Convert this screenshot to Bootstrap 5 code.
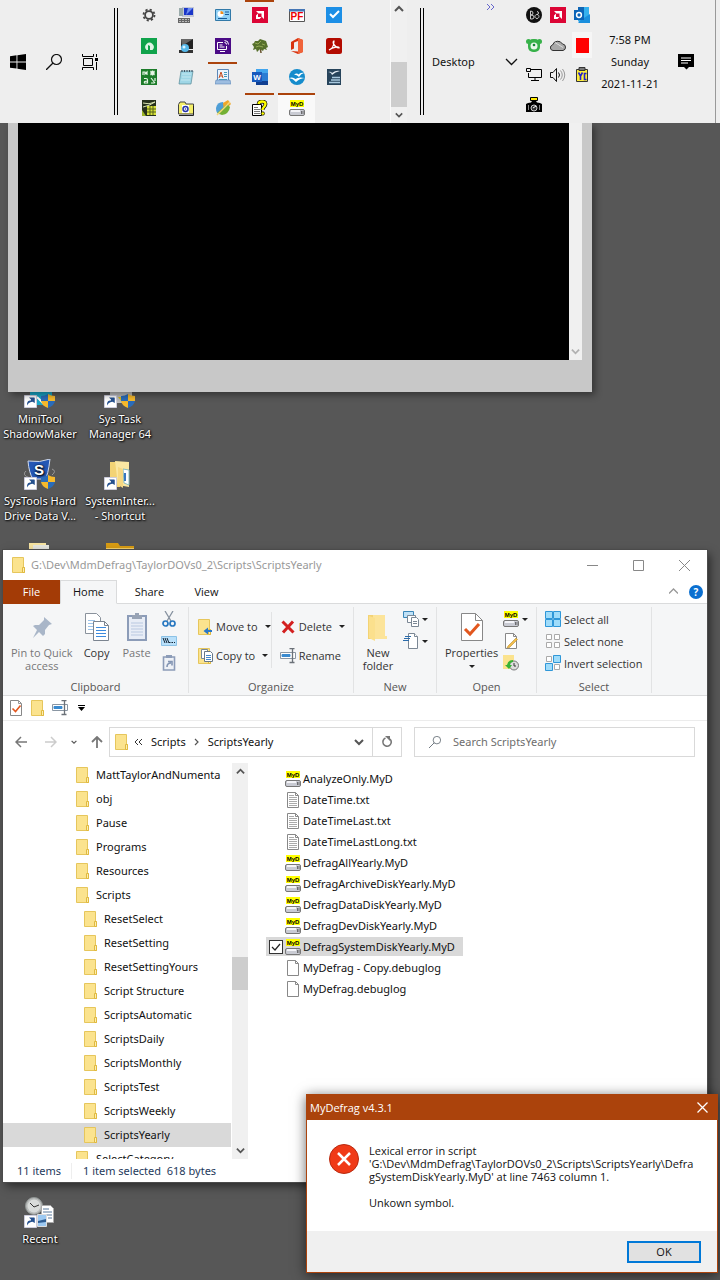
<!DOCTYPE html>
<html lang="en">
<head>
<meta charset="utf-8">
<meta name="viewport" content="width=device-width, initial-scale=1">
<title>Desktop</title>
<link href="https://cdn.jsdelivr.net/npm/bootstrap@5.3.0/dist/css/bootstrap.min.css" rel="stylesheet">
<style>
  :root { --accent: #ab430c; --ui: "Noto Sans", "Open Sans", sans-serif; --tight: "Open Sans", "Noto Sans", sans-serif; }
  body { font-family: var(--ui); font-size: 11px; line-height: 16px; color: #111; background: #575757; }
  button, input { font: inherit; }
  button { background: none; border: 0; padding: 0; color: inherit; }
  a { color: inherit; text-decoration: none; }
  svg { display: block; flex: none; }
  .i16 { width: 16px; height: 16px; }
  .i32 { width: 32px; height: 32px; }

  /* taskbar */
  .taskbar { background: #eee; height: 123px; z-index: 5; padding-right: 4px; }
  .rule { width: 4px; height: 107px; border: solid #000; border-width: 0 1px; flex: none; }
  .start-tools { width: 114px; padding: 0 16px 0 10px; }
  .apps { display: grid; grid-template-columns: repeat(6, 37px); grid-auto-rows: 31px; margin-left: 12px; height: 123px; overflow: hidden; }
  .apps button { display: grid; place-items: center; border-top: 2px solid transparent; margin: 0 4px; padding-bottom: 4px; }
  .apps .running { border-color: var(--accent); }
  .apps .front { border-color: var(--accent); background: #f9f9f9; margin: 0; }
  .bar-scroll { width: 17px; background: #f0f0f0; border-left: 1px solid #fafafa; margin-right: 13px; }
  .thumb { background: #cdcdcd; }
  .toolbar-menu { width: 90px; }
  .tray { display: grid; grid-template-columns: repeat(3, 24px); grid-auto-rows: 30px; }
  .tray button { display: grid; place-items: center; }
  .tray .lit { background: #f6f6f6; margin: 2px 2px; }
  .clock { line-height: 22px; width: 76px; }
  .edge { border-right: 1px solid #999; }

  /* desktop */
  .icons { display: grid; grid-template-columns: 80px 80px; grid-auto-rows: 82px; padding-top: 254px; width: 160px; }
  .icons a { color: #fff; text-align: center; line-height: 15px; text-shadow: 1px 1px 2px #000, 0 0 2px #000; white-space: nowrap; }
  .icons svg { margin: 0 auto 2px; }
  .icons .last { grid-row: 11; }
  .console { left: 8px; right: 128px; top: 0; height: 269px; background: #c8c8c8; padding: 0 10px 32px; box-shadow: 3px 3px 7px #0006; }
  .console-bar { width: 13px; background: #f0f0f0; }

  .explorer { left: 3px; right: 13px; top: 427px; bottom: 98px; background: #fff; box-shadow: 0 0 0 1px #4b4b4b, 3px 4px 9px #0008; }
  .caption, .tabs, .ribbon, .quick, .address, .status { flex-shrink: 0; }
  .caption { height: 30px; color: #999; padding-left: 8px; }
  .caption button { width: 46px; display: grid; place-items: center; }
  .tabs { height: 24px; border-bottom: 1px solid #dadbdc; font-size: 12px; font-family: var(--tight); font-size: 11px; }
  .tabs button { width: 57px; height: 24px; border: 1px solid transparent; }
  .tabs .tab-file { background: #a33b06; color: #fff; }
  .tabs .tab-on { background: #f5f6f7; border-color: #dadbdc; border-bottom-color: #f5f6f7; }
  .ribbon { background: #f5f6f7; height: 92px; border-bottom: 1px solid #dadbdc; padding: 3px 0 2px; font-family: var(--tight); }
  .group { border-right: 1px solid #e2e3e4; color: #333; line-height: 13px; padding-top: 1px; }
  .group > h2 { font-size: 11px; line-height: 13px; font-weight: 400; margin: auto 0 0; text-align: center; color: #555; }
  .big { display: flex; flex-direction: column; align-items: center; gap: 2px; line-height: 13px; white-space: nowrap; padding-top: 4px; }
  .dim { color: #777; }
  .cmd { display: flex; align-items: center; gap: 3px; white-space: nowrap; height: 22px; }
  .tri { width: 0; height: 0; border: solid transparent; border-width: 3px 3px 0; border-top-color: #222; }
  .split { border-left: 1px solid #e2e3e4; height: 56px; }
  .g-clip { width: 186px; } .g-org { width: 165px; padding-top: 5px; } .g-new { width: 83px; } .g-open { width: 100px; } .g-sel { width: 115px; }
  .g-org .cmd { height: 29px; }
  .quick { height: 25px; border-bottom: 1px solid #ececec; padding-left: 5px; gap: 6px; }
  .address { padding: 5px 12px 5px 8px; height: 41px; gap: 12px; }
  .steps { gap: 14px; }
  .box { border: 1px solid #d9d9d9; height: 30px; }
  .path { width: 293px; }
  .path .reload { border-left: 1px solid #d9d9d9; width: 29px; height: 28px; display: grid; place-items: center; }
  .find input { border: 0; outline: 0; width: 100%; min-width: 0; background: none; padding: 0; }
  .find input::placeholder { color: #6d6d6d; opacity: 1; }
  .panes { min-height: 0; padding-top: 1px; }
  .tree { width: 229px; overflow: hidden; }
  .tree a { display: flex; align-items: center; gap: 5px; height: 24px; padding-left: 72px; white-space: nowrap; overflow: hidden; width: 228px; color: #111; }
  .tree .sub { padding-left: 80px; }
  .tree .sel { background: #d9d9d9; }
  .tree-bar { width: 16px; background: #f0f0f0; }
  .files { padding: 5px 0 0 18px; }
  .files label { display: flex; align-items: center; height: 21px; padding: 0 8px 0 3px; width: max-content; white-space: nowrap; gap: 2px; }
  .files .sel { background: #d9d9d9; height: 19px; margin: 1px 0; }
  .files input { appearance: none; width: 14px; height: 14px; margin: 0; opacity: 0; }
  .files input:checked { opacity: 1; border: 1px solid #333; background: #fff url("data:image/svg+xml,%3Csvg xmlns='http://www.w3.org/2000/svg' viewBox='0 0 12 12'%3E%3Cpath d='M2 6l3 3 5-6' fill='none' stroke='%23222' stroke-width='1.2'/%3E%3C/svg%3E"); }
  .status { height: 23px; color: #1e395b; padding-left: 14px; gap: 10px; }
  .status span + span { border-left: 1px solid #eee; padding-left: 11px; }

  .alert-win { right: 2px; bottom: 7px; width: 412px; background: #fff; border: 1px solid var(--accent); box-shadow: 0 2px 12px #0009; font-family: var(--tight); }
  .alert-win header { background: var(--accent); color: #fff; height: 25px; padding: 0 9px 0 3px; }
  .alert-body { padding: 24px 16px 20px 22px; gap: 10px; line-height: 13px; min-height: 111px; white-space: nowrap; }
  .alert-win footer { background: #f0f0f0; height: 41px; padding: 0 16px; }
  .ok { width: 74px; height: 22px; border: 2px solid #0078d7; background: #e1e1e1; line-height: 14px; }
</style>
</head>
<body>
<svg width="0" height="0" class="position-absolute" aria-hidden="true">
  <symbol id="folder" viewBox="0 0 16 16"><path d="M1.500.5h11v10h1v5h-12z" fill="#fbe38e" stroke="#e6c65c"/><path d="M11.500 10.500h2v5h-2z" fill="#fdeeb0" stroke="#e0b93f"/></symbol>
  <symbol id="myd" viewBox="0 0 16 16"><path d="M1 0h14v7H1z" fill="#ff0"/><text x="8" y="6" text-anchor="middle" font-family="Liberation Sans" font-weight="700" font-size="6">MyD</text><rect x=".5" y="9.500" width="15" height="6" rx="1.500" fill="#c9cbd3" stroke="#777"/><path d="M2 11h9" stroke="#f4f4f8" stroke-width="2"/><path d="M12.500 11v3M14 11v3" stroke="#444" stroke-width=".7"/></symbol>
  <symbol id="txt" viewBox="0 0 16 16"><path d="M2.500.5h8l3 3v12h-11z" fill="#fff" stroke="#888"/><path d="M10.500.5v3h3" fill="none" stroke="#888"/><path d="M4 5.500h8M4 7.500h8M4 9.500h8M4 11.500h8M4 13.500h8M4 3.500h5" stroke="#aaa"/></symbol>
  <symbol id="blank" viewBox="0 0 16 16"><path d="M2.500.5h8l3 3v12h-11z" fill="#fff" stroke="#888"/><path d="M10.500.5v3h3" fill="none" stroke="#888"/></symbol>
  <symbol id="check" viewBox="0 0 16 16"><path d="M2.500.5h8l3 3v12h-11z" fill="#fff" stroke="#888"/><path d="M10.500.5v3h3" fill="none" stroke="#999"/><path d="M4.500 8.500l3 3 5-6" fill="none" stroke="#e2571e" stroke-width="1.600"/></symbol>
  <symbol id="rename" viewBox="0 0 16 16"><path d="M.5 4.500h15v6H.5z" fill="#fff" stroke="#8a96a3"/><path d="M2 6.500h8v2H2z" fill="#3a8bd0" stroke="#3a8bd0"/><path d="M9.500.5h5M9.500 14.500h5M12.500.5v14" fill="none" stroke="#6b7178" stroke-width="1.300"/></symbol>
  <symbol id="up" viewBox="0 0 10 10"><path d="M1 7l4-4 4 4" fill="none" stroke="#555" stroke-width="2"/></symbol>
  <symbol id="down" viewBox="0 0 10 10"><path d="M1 3l4 4 4-4" fill="none" stroke="#555" stroke-width="2"/></symbol>
  <symbol id="mag" viewBox="0 0 16 16"><circle cx="10.500" cy="5.500" r="5" fill="none" stroke="currentColor" stroke-width="1.200"/><path d="M7 9L0 16" stroke="currentColor" stroke-width="1.300"/></symbol>
  <symbol id="amd" viewBox="0 0 16 16"><path d="M0 0h16v16H0z" fill="#dc0535"/><path d="M4 4h8v8l-2.500-2.500v-3h-3zM4 8.500L6 6.500V10h3.500l-2 2H4z" fill="#fff"/></symbol>
  <symbol id="arrow" viewBox="0 0 13 13"><path d="M.5.500h12v12H.5z" fill="#fff" stroke="#ccd"/><path d="M3 10.500c0-4 1-5 4-5V3h3.500v5L9 6.800C6 7 4.500 8 3 10.500z" fill="#25508f"/><path d="M5 2.500h5.500V8z" fill="#25508f"/></symbol>
  <symbol id="shield" viewBox="0 0 14 14"><path d="M0 2q4 0 7-2v7H0z" fill="#2b6cb8"/><path d="M14 2q-4 0-7-2v7h7z" fill="#f6b92c"/><path d="M0 7h7v7Q1 12 0 7z" fill="#f6b92c"/><path d="M14 7H7v7q6-2 7-7z" fill="#2b6cb8"/></symbol>
</svg>

<div class="d-flex flex-column min-vh-100">
<nav class="taskbar d-flex align-items-center position-relative" aria-label="Taskbar">
  <div class="start-tools d-flex justify-content-between">
    <button aria-label="Start"><svg class="i16" viewBox="0 0 16 16"><path d="M0 2.200L6.500 1.300V7.500H0zM7.400 1.200L16 0v7.500H7.400zM0 8.400h6.500v6.200L0 13.700zM7.400 8.400H16V16l-8.600-1.200z"/></svg></button>
    <button aria-label="Search"><svg class="i16" viewBox="0 0 16 16"><use href="#mag"/></svg></button>
    <button aria-label="Task view"><svg class="i16" viewBox="0 0 16 16" fill="none" stroke="#000"><path d="M1.500 4.500h9v7h-9zM.5 0v2.500h11V0M.5 16v-2.500h11V16M14.500 0v3M14.500 8v8"/><path d="M13 4h3v3h-3z" fill="#000" stroke="none"/></svg></button>
  </div>
  <div class="rule"></div>
  <div class="apps">
    <button aria-label="Settings"><svg class="i16" viewBox="0 0 16 16" fill="none" stroke="#444"><circle cx="8" cy="8" r="5.500" stroke-width="1.800" stroke-dasharray="2.160 2.160"/><circle cx="8" cy="8" r="3.900" stroke-width="1.800"/></svg></button>
    <button aria-label="Computer"><svg class="i16" viewBox="0 0 16 16"><path d="M4 0h12v10H4z" fill="#c4c8d6"/><path d="M6 1h9v7H6z" fill="#1935c9"/><path d="M10 1h5L8 8z" fill="#6c8cf0"/><path d="M1 1h4v8H1z" fill="#9aa"/><path d="M0 11h12v5H0z" fill="#666"/><path d="M1 12.500h10M1 14.500h10" stroke="#bbb" stroke-dasharray="2 1"/></svg></button>
    <button aria-label="Control Panel"><svg class="i16" viewBox="0 0 16 16"><path d="M.5 2.500h15v11H.5z" fill="#8fd0f5" stroke="#3179a8"/><circle cx="5.500" cy="7" r="3" fill="#fff"/><path d="M5.500 7V4a3 3 0 0 1 3 3z" fill="#f08c1a"/><path d="M10 5h4M10 7.500h4M3 11.500h9" stroke="#145b9c"/></svg></button>
    <button class="running" aria-label="AMD"><svg class="i16"><use href="#amd"/></svg></button>
    <button aria-label="PF"><svg class="i16" viewBox="0 0 16 16"><path d="M.5 2.500h15v12H.5z" fill="#fff" stroke="#555"/><path d="M0 2h16v2.500H0z" fill="#4576b5"/><text x="8" y="13" text-anchor="middle" font-family="Liberation Sans" font-weight="700" font-size="10" fill="#e00">PF</text></svg></button>
    <button aria-label="To Do"><svg class="i16" viewBox="0 0 16 16"><path d="M0 0h16v16H0z" fill="#1c8fe6"/><path d="M4 7l3 3 6-6" fill="none" stroke="#fff" stroke-width="2"/></svg></button>

    <button aria-label="Green app"><svg class="i16" viewBox="0 0 16 16"><path d="M0 0h16v16H0z" fill="#10a34b"/><path d="M5.500 12a4.200 4.200 0 1 1 6 0H9V8L7 7v5z" fill="#dff5e6"/></svg></button>
    <button aria-label="Network"><svg class="i16" viewBox="0 0 16 16"><path d="M3 1h12v10H3z" fill="#222"/><path d="M3 1h12L4 8z" fill="#666"/><path d="M1 12h14v3H1z" fill="#333"/><circle cx="7" cy="10" r="4" fill="#55b8ea"/><circle cx="6" cy="9" r="1.500" fill="#d9f3ff"/></svg></button>
    <button aria-label="Media"><svg class="i16" viewBox="0 0 16 16"><path d="M0 0h16v16H0z" fill="#4b0b86"/><path d="M8 4.500H2.500v7h9V8M5 13.500h5M9.500 4.500q2 0 2 2M9.500 2.500q4 0 4 4" fill="none" stroke="#fff"/><path d="M4.500 7h3M4.500 9h5" stroke="#fff"/></svg></button>
    <button aria-label="Tree"><svg class="i16" viewBox="0 0 16 16"><path d="M8 8l1 7" stroke="#66512c" stroke-width="1.500"/><path d="M0 6l2-1 1-2 3 0 2-2 3 1 3 1 1 3 1 3-2 1 1 2-3-1-1 2-3-2-3 3-1-3-3 1 1-3z" fill="#56702c"/><path d="M3 5l3 1 3-3M10 6l3 1M4 9l3-1 4 1" stroke="#93aa55" fill="none"/></svg></button>
    <button aria-label="Office"><svg class="i16" viewBox="0 0 16 16"><path d="M2 4l7-4 5 2v12l-5 2-7-3 7 .5V3L5 4.500v6L2 12z" fill="#d8330f"/><path d="M9 0l5 2v12l-5 2z" fill="#f0633a"/></svg></button>
    <button aria-label="Acrobat"><svg class="i16" viewBox="0 0 16 16"><rect width="16" height="16" rx="2.500" fill="#b30b00"/><path d="M3 12c3-1 5-5 5-9-2 0-.5 6 5 7 1-2-6-1-10 2z" fill="none" stroke="#fff" stroke-width="1.200"/></svg></button>

    <button aria-label="Excel tool"><svg class="i16" viewBox="0 0 16 16"><path d="M0 0h16v16H0z" fill="#1c7c2a"/><path d="M2 6V3h2v2l2-2v3M9 4h5M11.500 1.500v5M9.500 2l4 4M13.500 2l-4 4M10 9l4 5M14 9v3M13.500 14H10M3 9.500h2q1.500 0 1.500 1.500v3h-3q-1-2 3-2" fill="none" stroke="#e6f5e6" stroke-width="1.200"/></svg></button>
    <button aria-label="Notepad"><svg class="i16" viewBox="0 0 16 16"><path d="M3 2h12l-2 13H1z" fill="#9fd6e6" stroke="#578997" stroke-width=".7"/><path d="M4 5h9M4 8h9M3 11h9" stroke="#c4e7f0"/><path d="M4 1v2M6.500 1v2M9 1v2M11.500 1v2M14 1v2" stroke="#456"/></svg></button>
    <button class="running" aria-label="WordPad"><svg class="i16" viewBox="0 0 16 16"><path d="M2.500.5h11v11h-11z" fill="#e9f3fc" stroke="#5b87b8"/><path d="M1 11l-1 4h16l-1-4z" fill="#9dbde0" stroke="#5b87b8" stroke-width=".6"/><path d="M4 9l2-6 2 6M5 7h2" fill="none" stroke="#c64d21"/><path d="M9 3.500h3M9 5.500h3M9 7.500h3M4 10.500h8" stroke="#49b"/></svg></button>
    <button aria-label="Word"><svg class="i16" viewBox="0 0 16 16"><path d="M4 0h12v16H4z" fill="#2b7cd3"/><path d="M4 0h12v4H4z" fill="#41a5ee"/><path d="M4 12h12v4H4z" fill="#103f91"/><path d="M0 3h10v10H0z" fill="#185abd"/><text x="5" y="11" text-anchor="middle" font-family="Liberation Sans" font-weight="700" font-size="8" fill="#fff">W</text></svg></button>
    <button aria-label="OpenOffice"><svg class="i16" viewBox="0 0 16 16"><circle cx="8" cy="8" r="8" fill="#158ccc"/><path d="M5 5.500q3-2 4.500 0 2-2.500 5.500-1.500-3 .5-5 4-2-2.500-5-2.500zM0 9q4-1.500 6.500 1 3-2.500 9-1-5 .5-8.500 4Q4 9.500 0 9z" fill="#fff"/></svg></button>
    <button aria-label="Writer"><svg class="i16" viewBox="0 0 16 16"><path d="M1 0h14v16H1z" fill="#27445b"/><path d="M2 3q3-1 4 1 4-3 8-2-5 1-8 4-1-3-4-3z" fill="#e6eef5"/><path d="M6 8.500h8M5 11h9M3 13.500h11" stroke="#a8c8de" stroke-width="1.500"/></svg></button>

    <button aria-label="Calc"><svg class="i16" viewBox="0 0 16 16"><path d="M1 0h14v16H1z" fill="#26301c"/><path d="M2 3q6 2 12-1M2 7q6-1 12-5" stroke="#dbe6b4" fill="none"/><path d="M6 6h9v9H6z" fill="#d6e03a"/><path d="M6 9h9M6 12h9M9 6v9M12 6v9" stroke="#55621a"/><path d="M1 10l4 6H1z" fill="#9bb327"/></svg></button>
    <button aria-label="Mail folder"><svg class="i16" viewBox="0 0 16 16"><path d="M.5 4.500L2 2h5l1 2h7.500v10H.5z" fill="#f5ef6a" stroke="#444"/><path d="M4 5h7v8H4z" fill="#fff"/><circle cx="7.500" cy="9" r="2.500" fill="none" stroke="#2434a8" stroke-width="1.500"/><circle cx="7.500" cy="9" r=".8" fill="#2434a8"/><path d="M1 15.500h14.500V6" stroke="#222" fill="none"/></svg></button>
    <button aria-label="Paint"><svg class="i16" viewBox="0 0 16 16"><path d="M1 8q1-6 7-6l3 7-5 5q-5 1-5-6z" fill="#4e9ed6"/><path d="M8 3l5-3 3 4-7 7z" fill="#f0a728"/><path d="M2 13L12 4l3 3q-1 7-8 8z" fill="#73b034"/><path d="M2 15L15 2" stroke="#f3d77a" stroke-width="1.500"/></svg></button>
    <button class="running" aria-label="Help"><svg class="i16" viewBox="0 0 16 16"><path d="M.5 4.500h9v11h-9z" fill="#fff" stroke="#000"/><path d="M2 7.500h4M2 9.500h6M2 11.500h6M2 13.500h6" stroke="#777"/><path d="M6.500 4q.5-2.500 3.500-2.500 3.500 0 3.500 2.500c0 2.500-3 3-3 6" fill="none" stroke="#000" stroke-width="3.800"/><path d="M6.500 4q.5-2.500 3.500-2.500 3.500 0 3.500 2.500c0 2.500-3 3-3 6" fill="none" stroke="#ff0" stroke-width="2.400"/><circle cx="10.800" cy="13.500" r="1.700" fill="#ff0" stroke="#000" stroke-width=".7"/></svg></button>
    <button class="front" aria-label="MyDefrag"><svg class="i16"><use href="#myd"/></svg></button>
  </div>
  <div class="ms-auto"></div>
  <div class="bar-scroll d-flex flex-column align-items-center h-100 pt-1 pb-1">
    <svg width="10" height="10"><use href="#up"/></svg>
    <div class="thumb w-100 mt-auto mb-1" style="height:45px"></div>
    <svg width="10" height="8"><use href="#down"/></svg>
  </div>
  <div class="rule me-2"></div>
  <div class="toolbar-menu position-relative h-100 d-flex align-items-center">
    <button class="d-flex align-items-center justify-content-between w-100 ps-0 px-1" style="height:32px">Desktop
      <svg width="13" height="13" viewBox="0 0 13 13"><path d="M1 4l5.500 5.500L12 4" fill="none" stroke="#111" stroke-width="1.300"/></svg></button>
    <svg class="position-absolute top-0 end-0 me-4 mt-1" width="12" height="6" viewBox="0 0 12 6" fill="none" stroke="#66c"><path d="M1 0l3 3-3 3M5 0l3 3-3 3"/></svg>
  </div>
  <div class="tray h-100">
    <button aria-label="B&amp;O"><svg class="i16" viewBox="0 0 16 16"><circle cx="8" cy="8" r="8" fill="#111"/><path d="M4.500 4v8h1.500q2 0 2-2T5 8q2 0 2-2T4.500 4M11 4.500a1.500 1.500 0 1 1 0 3 2 2 0 1 1-.1 0" fill="none" stroke="#ddd" stroke-width=".9"/></svg></button>
    <button aria-label="AMD"><svg class="i16"><use href="#amd"/></svg></button>
    <button aria-label="Outlook"><svg class="i16" viewBox="0 0 16 16"><path d="M4 0h11v14H4z" fill="#35b1ee"/><path d="M4 0h6v6H4z" fill="#1066b5"/><path d="M4 15l12-8v9H5z" fill="#1a8fdd"/><path d="M0 3h10v10H0z" fill="#0a64b8"/><circle cx="5" cy="8" r="2.400" fill="none" stroke="#fff" stroke-width="1.500"/></svg></button>
    <button aria-label="Bear"><svg class="i16" viewBox="0 0 16 16"><circle cx="2.500" cy="4.500" r="2.500" fill="#37b14a"/><circle cx="13.500" cy="4.500" r="2.500" fill="#37b14a"/><rect x="2" y="2" width="12" height="13" rx="5" fill="#37b14a"/><circle cx="8" cy="9" r="3.500" fill="#e8f7ea"/><circle cx="8" cy="8" r="1.300" fill="#183"/></svg></button>
    <button aria-label="OneDrive"><svg class="i16" viewBox="0 0 16 16"><path d="M3 13.500a2.800 2.800 0 0 1-.5-5.500 5.500 5.500 0 0 1 10-1 3.300 3.300 0 0 1 .5 6.500z" fill="#a9a9a9" stroke="#333"/><path d="M5 5.500l8 5" stroke="#ddd"/></svg></button>
    <button class="lit" aria-label="Red"><svg width="13" height="15"><path d="M0 0h13v15H0z" fill="#f00"/></svg></button>
    <button aria-label="Network status"><svg class="i16" viewBox="0 0 16 16" fill="none" stroke="#000"><path d="M5 2.500h10.500v8H2.500V6M9 10.500v3M5 13.500h8M.5 1.500h4v3h-4z"/></svg></button>
    <button aria-label="Volume"><svg class="i16" viewBox="0 0 16 16" fill="none" stroke="#111"><path d="M.5 5.500H3l3.500-4v13L3 10.500H.5z"/><path d="M8.500 5.500q2 2.500 0 5"/><path d="M10.500 3.500q3.500 4.500 0 9M12.500 2q4.500 6 0 12" stroke="#999"/></svg></button>
    <button aria-label="Clipboard"><svg class="i16" viewBox="0 0 16 16"><path d="M2.500 2.500h11v12h-11z" fill="#ffef3a" stroke="#333"/><path d="M5 .5h6v3H5z" fill="#777" stroke="#333"/><path d="M4.500 5.500l2 3.500v4M8.500 5.500L6.500 9M12.500 6.500h-2v6h2" fill="none" stroke="#22c" stroke-width="1.600"/></svg></button>
    <button aria-label="Camera"><svg class="i16" viewBox="0 0 16 16"><path d="M4.500.5h7v3h-7z" fill="#ffea00" stroke="#000"/><path d="M0 7l2-1 3-.5L6 4h4l1 1.500 3 .5 2 1v8H0z"/><circle cx="8" cy="11" r="3" fill="#333" stroke="#ccc"/><path d="M7 11l3-2" stroke="#fff"/><path d="M2.500 8v5M13.500 8v5" stroke="#888"/></svg></button>
  </div>
  <div class="clock text-center pe-2 ps-1"><div>7:58 PM</div><div>Sunday</div><div>2021-11-21</div></div>
  <button class="h-100 edge ps-2" style="width:46px" aria-label="Notifications"><svg class="i16" viewBox="0 0 16 16"><path d="M0 0h16v13h-5l-2.500 2.500L6 13H0z"/><path d="M3 4h10M3 6.500h10M3 9h7" stroke="#fff"/></svg></button>
</nav>

<main class="position-relative flex-fill">
  <div class="icons">
    <a href="#"><svg class="i32" viewBox="0 0 32 32"><path d="M6 4h22v24H6z" fill="#19a7c8"/><path d="M13 20l8 8" stroke="#fff" stroke-width="2"/><use href="#arrow" x="0" y="18" width="13" height="13"/><use href="#shield" x="17" y="17" width="14" height="14"/></svg>MiniTool<br>ShadowMaker</a>
    <a href="#"><svg class="i32" viewBox="0 0 32 32"><path d="M6 4h22v22H6z" fill="#bbb"/><path d="M14 20l6 8 3-8z" fill="#d6b920"/><use href="#arrow" x="0" y="18" width="13" height="13"/><use href="#shield" x="17" y="17" width="14" height="14"/></svg>Sys Task<br>Manager 64</a>
    <a href="#"><svg class="i32" viewBox="0 0 32 32"><path d="M4 2q12 2 22-2-2 17-5 20H9Q5 14 4 2z" fill="#2457b5" stroke="#ccd8ee"/><path d="M2 12q-5 4 4 7M28 10q5 2 0 6" stroke="#999" fill="none"/><text x="15" y="16" text-anchor="middle" font-family="Liberation Sans" font-weight="700" font-size="15" fill="#fff">S</text><use href="#arrow" x="0" y="18" width="13" height="13"/><use href="#shield" x="17" y="16" width="14" height="14"/></svg>SysTools Hard<br>Drive Data V...</a>
    <a href="#"><svg class="i32" viewBox="0 0 32 32"><path d="M6 3h10v25H6z" fill="#f3d375"/><path d="M11 2l14 1v25l-11-2z" fill="#fbe7a2"/><path d="M19 10l6 1v15l-5-2z" fill="#fff" stroke="#8bb"/><path d="M21 14v8" stroke="#3a78c0" stroke-width="2"/><path d="M14 8l5 2v19l-5-3z" fill="#f7d983"/><use href="#arrow" x="0" y="18" width="13" height="13"/></svg>SystemInter...<br>- Shortcut</a>
    <a href="#" aria-label="Folder"><svg class="i32" viewBox="0 0 32 32"><path d="M5 2h17v28H5z" fill="#f6e3a0"/><path d="M9 4h16v28H9z" fill="#e7e7e0"/></svg></a>
    <a href="#" aria-label="Folder"><svg class="i32" viewBox="0 0 32 32"><path d="M2 2h12l2 3h14v25H2z" fill="#d79b12"/><path d="M2 7h28v23H2z" fill="#f8d46b"/></svg></a>
    <a href="#" class="last"><svg class="i32" viewBox="0 0 32 32"><circle cx="10" cy="9" r="8.500" fill="#b9bcbb" stroke="#8f9493"/><circle cx="10" cy="9" r="6.500" fill="#d9dcdb"/><path d="M6 6l4 4 5-2" fill="none" stroke="#333"/><path d="M17.500 8.500h9l3 3v14h-12z" fill="#fff" stroke="#aaa"/><path d="M19 12h6M19 15h9M19 18h9M24 21h4" stroke="#58789c"/><path d="M13.500 17.500h9v12h-9z" fill="#9cc9f2" stroke="#ddd"/><path d="M14 24l8-2v3l-8 1z" fill="#2e5d93"/><use href="#arrow" x="0" y="18" width="13" height="13"/></svg>Recent</a>
  </div>

  <section class="console position-absolute d-flex" aria-label="Console">
    <div class="bg-black flex-fill"></div>
    <div class="console-bar d-flex align-items-end justify-content-center pb-1"><svg width="9" height="9" viewBox="0 0 10 10" opacity=".4"><use href="#down"/></svg></div>
  </section>

  <section class="explorer position-absolute d-flex flex-column" aria-label="File Explorer">
    <div class="caption d-flex align-items-center">
      <svg class="i16"><use href="#folder"/></svg>
      <span class="ms-1 me-auto text-nowrap">G:\Dev\MdmDefrag\TaylorDOVs0_2\Scripts\ScriptsYearly</span>
      <button aria-label="Minimize"><svg width="11" height="11"><path d="M0 5.500h11" stroke="#888"/></svg></button>
      <button aria-label="Maximize"><svg width="11" height="11"><path d="M.5.500h10v10H.5z" fill="none" stroke="#888"/></svg></button>
      <button aria-label="Close"><svg width="11" height="11"><path d="M0 0l11 11M11 0L0 11" stroke="#888"/></svg></button>
    </div>
    <div class="tabs d-flex">
      <button class="tab-file">File</button><button class="tab-on">Home</button><button class="ms-1">Share</button><button>View</button>
      <div class="ms-auto d-flex align-items-center pe-1" style="gap:11px">
        <svg width="9" height="9" viewBox="0 0 9 9"><path d="M0 6.500L4.500 2 9 6.500" fill="none" stroke="#999" stroke-width="1.300"/></svg>
        <svg width="14" height="14" viewBox="0 0 14 14"><circle cx="7" cy="7" r="7" fill="#0a6fd0"/><text x="7" y="11" text-anchor="middle" font-weight="700" font-size="10" fill="#fff" font-family="Open Sans">?</text></svg>
      </div>
    </div>
    <div class="ribbon d-flex">
      <div class="group g-clip d-flex flex-column">
        <div class="d-flex align-items-start gap-2 ps-2">
          <button class="big dim"><svg class="i32" viewBox="0 0 32 32"><path d="M18 5l8 7-3 1-4 5v4l-2 2-4-4-6 6 4-8-4-4 2-1h4l5-5z" fill="#a9b6c8"/></svg>Pin to Quick<br>access</button>
          <button class="big"><svg class="i32" viewBox="0 0 32 32"><path d="M4.500 1.500h11l4 4v16h-15z" fill="#fff" stroke="#8a929c"/><path d="M7 8.500h7M7 11.500h7M7 14.500h7M7 17.500h7" stroke="#9cc3ea"/><path d="M12.500 9.500h11l4 4v15h-15z" fill="#fff" stroke="#7b8490"/><path d="M23.500 9.500v4h4" fill="none" stroke="#7b8490"/><path d="M15 15.500h10M15 18.500h10M15 21.500h10M15 24.500h10" stroke="#3b8ade"/></svg>Copy</button>
          <button class="big dim"><svg class="i32" viewBox="0 0 32 32"><path d="M7 4h18v24H7z" fill="#e8edf6" stroke="#8c9cb8" stroke-width="2"/><path d="M11 3h3V1h4v2h3v4H11z" fill="#98a3b5"/><path d="M10 11h12M10 14h12M10 17h12M10 20h12M10 23h12" stroke="#b9c8e0"/></svg>Paste</button>
          <div class="d-flex flex-column">
            <button class="cmd" aria-label="Cut"><svg class="i16" viewBox="0 0 16 16" fill="none"><path d="M4 0l6 10M12 0L6 10" stroke="#8792a0" stroke-width="1.300"/><circle cx="4.500" cy="12.500" r="2.500" stroke="#2878c0" stroke-width="1.700"/><circle cx="11.500" cy="12.500" r="2.500" stroke="#2878c0" stroke-width="1.700"/></svg></button>
            <button class="cmd" aria-label="Copy path"><svg class="i16" viewBox="0 0 16 16"><path d="M.5 3.500h15v9H.5z" fill="#b9e0fa" stroke="#8cc2e6"/><path d="M2 5l2 5M4 5l2 5M6 5l2 5" stroke="#123"/><path d="M8 9.500h6" stroke="#123" stroke-dasharray="1.500 1"/></svg></button>
            <button class="cmd" aria-label="Paste shortcut"><svg class="i16" viewBox="0 0 16 16"><path d="M2.500 2h11v13h-11z" fill="#eef1f6" stroke="#8c9cb8" stroke-width="1.600"/><path d="M5 0h6v3H5z" fill="#8c9cb8"/><path d="M6 12q0-4 4-4M7 6.500h4v4" fill="none" stroke="#8395b3" stroke-width="1.600"/></svg></button>
          </div>
        </div>
        <h2>Clipboard</h2>
      </div>
      <div class="group g-org d-flex flex-column">
        <div class="d-flex">
          <div class="ps-2">
            <button class="cmd"><svg class="i16" viewBox="0 0 16 16"><use href="#folder"/><path d="M15 11h-4V8.500L6.500 12l4.500 3.500V13h4z" fill="#2a78c8"/></svg>Move to <i class="tri ms-1"></i></button>
            <button class="cmd"><svg class="i16" viewBox="0 0 16 16"><use href="#folder"/><path d="M4.500 1.500h6v9h-6z" fill="#fff" stroke="#789"/><path d="M7.500 3.500h6l2 2v8h-8z" fill="#fff" stroke="#678"/><path d="M9 7.500h5M9 9.500h5M9 11.500h5" stroke="#48c"/></svg>Copy to <i class="tri ms-1"></i></button>
          </div>
          <div class="split ms-auto me-1"></div>
          <div class="ps-1 pe-2">
            <button class="cmd"><svg class="i16" viewBox="0 0 16 16"><path d="M2.500 2.500l11 11M13 2.500L3 13.500" stroke="#d32020" stroke-width="3"/></svg>Delete <i class="tri ms-1"></i></button>
            <button class="cmd"><svg class="i16"><use href="#rename"/></svg>Rename</button>
          </div>
        </div>
        <h2>Organize</h2>
      </div>
      <div class="group g-new d-flex flex-column">
        <div class="d-flex align-items-start justify-content-between px-2">
          <button class="big"><svg class="i32" viewBox="0 0 32 32"><path d="M6 3h10v24H6z" fill="#f3d375"/><path d="M11 3h12v21h2v3H11z" fill="#fce49a"/><path d="M7 4l6 2v23l-6-3z" fill="#fbe08d"/></svg>New<br>folder</button>
          <div>
            <button class="cmd" aria-label="New item"><svg class="i16" viewBox="0 0 16 16" fill="#fff" stroke="#7b8794"><path d="M.5.500h10v6H.5z" fill="#bfe1f7" stroke="#3a86b8"/><path d="M4.500 4.500h8v7h-8z"/><path d="M8.500 6.500h5l2 2v7h-7z"/><path d="M10 10.500h4M10 12.500h4"/></svg><i class="tri"></i></button>
            <button class="cmd" aria-label="Easy access"><svg class="i16" viewBox="0 0 16 16" fill="#fff" stroke="#7b8794"><path d="M5.500.5h6l3 3v12h-9z"/><path d="M11.500.5v3h3"/><path d="M2 3.500h6M1 5.500h6M0 7.500h6" stroke="#2b6cab"/></svg><i class="tri"></i></button>
          </div>
        </div>
        <h2>New</h2>
      </div>
      <div class="group g-open d-flex flex-column">
        <div class="d-flex align-items-start justify-content-between px-1">
          <button class="big ps-1"><svg class="i32" viewBox="0 0 32 32"><path d="M5.500 1.500h14l7 7v20h-21z" fill="#fff" stroke="#888"/><path d="M19.500 1.500v7h7" fill="none" stroke="#888"/><path d="M9 17l5 5 9-10" fill="none" stroke="#e2571e" stroke-width="3"/></svg>Properties<i class="tri mt-1"></i></button>
          <div class="pe-1">
            <button class="cmd" aria-label="Open"><svg class="i16"><use href="#myd"/></svg><i class="tri"></i></button>
            <button class="cmd" aria-label="Edit"><svg class="i16" viewBox="0 0 16 16"><use href="#blank"/><path d="M5 13l8-8 1.500 1.500-8 8L4 15z" fill="#f2bd4c" stroke="#b98f33" stroke-width=".6"/></svg></button>
            <button class="cmd" aria-label="History"><svg class="i16" viewBox="0 0 16 16"><path d="M0 0h11v14H0z" fill="#fbe38e"/><circle cx="11" cy="10.500" r="4.500" fill="#ddd" stroke="#777"/><path d="M11 8v3h2" stroke="#333" fill="none"/><path d="M10 5q-5 0-6 5H2l4 4 3-4H7q0-3 3-3z" fill="#35b335"/></svg></button>
          </div>
        </div>
        <h2>Open</h2>
      </div>
      <div class="group g-sel d-flex flex-column">
        <div class="ps-2">
          <button class="cmd"><svg class="i16" viewBox="0 0 16 16"><path d="M.5.500h7v7h-7zM8.500.5h7v7h-7zM.5 8.500h7v7h-7zM8.500 8.500h7v7h-7z" fill="#9fdcfa" stroke="#2f97d8"/></svg>Select all</button>
          <button class="cmd"><svg class="i16" viewBox="0 0 16 16"><path d="M1.500 1.500h5v5h-5zM9.500 1.500h5v5h-5zM1.500 9.500h5v5h-5zM9.500 9.500h5v5h-5z" fill="#fff" stroke="#aaa"/></svg>Select none</button>
          <button class="cmd"><svg class="i16" viewBox="0 0 16 16"><path d="M1.500 1.500h5v5h-5zM9.500 9.500h5v5h-5z" fill="#fff" stroke="#aaa"/><path d="M8.500.5h7v7h-7zM.5 8.500h7v7h-7z" fill="#9fdcfa" stroke="#2f97d8"/></svg>Invert selection</button>
        </div>
        <h2>Select</h2>
      </div>
    </div>
    <div class="quick d-flex align-items-center">
      <button aria-label="Properties"><svg class="i16"><use href="#check"/></svg></button>
      <button aria-label="New folder"><svg class="i16"><use href="#folder"/></svg></button>
      <button aria-label="Rename"><svg class="i16"><use href="#rename"/></svg></button>
      <button aria-label="Customize"><svg width="7" height="6" class="ms-1"><path d="M0 .5h7" stroke="#000"/><path d="M0 2h7L3.500 6z"/></svg></button>
    </div>
    <div class="address d-flex align-items-center">
      <div class="steps d-flex align-items-center ps-1">
        <button aria-label="Back"><svg width="12" height="12" viewBox="0 0 12 12"><path d="M12 6H1M6 1L1 6l5 5" fill="none" stroke="#777" stroke-width="1.500"/></svg></button>
        <button aria-label="Forward" class="ms-1"><svg width="12" height="12" viewBox="0 0 12 12"><path d="M0 6h11M6 1l5 5-5 5" fill="none" stroke="#ccc" stroke-width="1.500"/></svg></button>
        <button aria-label="Recent locations"><svg width="6" height="6" viewBox="0 0 10 10"><use href="#down"/></svg></button>
        <button aria-label="Up"><svg width="12" height="12" viewBox="0 0 12 12"><path d="M6 12V1M1 6l5-5 5 5" fill="none" stroke="#777" stroke-width="1.800"/></svg></button>
      </div>
      <div class="d-flex align-items-center flex-fill" style="gap:12px;margin-left:-6px">
      <div class="box path d-flex align-items-center ps-1">
        <svg class="i16"><use href="#folder"/></svg>
        <svg class="ms-1" width="9" height="6" viewBox="0 0 9 6" fill="none" stroke="#333"><path d="M4 0L1 3l3 3M8 0L5 3l3 3"/></svg>
        <a href="#" class="ms-2">Scripts</a>
        <svg class="mx-2" width="6" height="8" viewBox="0 0 6 8"><path d="M1 1l3 3-3 3" fill="none" stroke="#555" stroke-width="1.200"/></svg>
        <a href="#">ScriptsYearly</a>
        <svg class="ms-auto me-2" width="10" height="10"><use href="#down"/></svg>
        <button class="reload" aria-label="Refresh"><svg width="12" height="12" viewBox="0 0 12 12"><path d="M9 3a4.200 4.200 0 1 1-4.500-.9" fill="none" stroke="#777" stroke-width="1.600"/><path d="M4 0h5v5z" fill="#777"/></svg></button>
      </div>
      <div class="box find d-flex align-items-center flex-fill gap-2 text-secondary" style="padding-left:14px">
        <svg width="12" height="12" viewBox="0 0 16 16"><use href="#mag"/></svg>
        <input class="ms-1" type="search" aria-label="Search" placeholder="Search ScriptsYearly">
      </div>
      </div>
    </div>
    <div class="panes d-flex flex-fill">
      <nav class="tree" aria-label="Folders">
        <a href="#"><svg class="i16"><use href="#folder"/></svg>MattTaylorAndNumenta</a>
        <a href="#"><svg class="i16"><use href="#folder"/></svg>obj</a>
        <a href="#"><svg class="i16"><use href="#folder"/></svg>Pause</a>
        <a href="#"><svg class="i16"><use href="#folder"/></svg>Programs</a>
        <a href="#"><svg class="i16"><use href="#folder"/></svg>Resources</a>
        <a href="#"><svg class="i16"><use href="#folder"/></svg>Scripts</a>
        <a href="#" class="sub"><svg class="i16"><use href="#folder"/></svg>ResetSelect</a>
        <a href="#" class="sub"><svg class="i16"><use href="#folder"/></svg>ResetSetting</a>
        <a href="#" class="sub"><svg class="i16"><use href="#folder"/></svg>ResetSettingYours</a>
        <a href="#" class="sub"><svg class="i16"><use href="#folder"/></svg>Script Structure</a>
        <a href="#" class="sub"><svg class="i16"><use href="#folder"/></svg>ScriptsAutomatic</a>
        <a href="#" class="sub"><svg class="i16"><use href="#folder"/></svg>ScriptsDaily</a>
        <a href="#" class="sub"><svg class="i16"><use href="#folder"/></svg>ScriptsMonthly</a>
        <a href="#" class="sub"><svg class="i16"><use href="#folder"/></svg>ScriptsTest</a>
        <a href="#" class="sub"><svg class="i16"><use href="#folder"/></svg>ScriptsWeekly</a>
        <a href="#" class="sub sel"><svg class="i16"><use href="#folder"/></svg>ScriptsYearly</a>
        <a href="#"><svg class="i16"><use href="#folder"/></svg>SelectCategory</a>
      </nav>
      <div class="tree-bar d-flex flex-column align-items-center pt-1 pb-1">
        <svg width="9" height="9" viewBox="0 0 10 10"><use href="#up"/></svg>
        <div class="thumb w-100 mt-auto" style="height:33px;margin-bottom:156px"></div>
        <svg width="9" height="9" viewBox="0 0 10 10"><use href="#down"/></svg>
      </div>
      <div class="files">
        <label><input type="checkbox"><svg class="i16"><use href="#myd"/></svg>AnalyzeOnly.MyD</label>
        <label><input type="checkbox"><svg class="i16"><use href="#txt"/></svg>DateTime.txt</label>
        <label><input type="checkbox"><svg class="i16"><use href="#txt"/></svg>DateTimeLast.txt</label>
        <label><input type="checkbox"><svg class="i16"><use href="#txt"/></svg>DateTimeLastLong.txt</label>
        <label><input type="checkbox"><svg class="i16"><use href="#myd"/></svg>DefragAllYearly.MyD</label>
        <label><input type="checkbox"><svg class="i16"><use href="#myd"/></svg>DefragArchiveDiskYearly.MyD</label>
        <label><input type="checkbox"><svg class="i16"><use href="#myd"/></svg>DefragDataDiskYearly.MyD</label>
        <label><input type="checkbox"><svg class="i16"><use href="#myd"/></svg>DefragDevDiskYearly.MyD</label>
        <label class="sel"><input type="checkbox" checked><svg class="i16"><use href="#myd"/></svg>DefragSystemDiskYearly.MyD</label>
        <label><input type="checkbox"><svg class="i16"><use href="#blank"/></svg>MyDefrag - Copy.debuglog</label>
        <label><input type="checkbox"><svg class="i16"><use href="#blank"/></svg>MyDefrag.debuglog</label>
      </div>
    </div>
    <div class="status d-flex align-items-center"><span>11 items</span><span>1 item selected&nbsp; 618 bytes</span></div>
  </section>

  <section class="alert-win position-absolute" role="alertdialog" aria-label="MyDefrag v4.3.1">
    <header class="d-flex align-items-center justify-content-between">MyDefrag v4.3.1
      <button aria-label="Close"><svg width="11" height="11"><path d="M.5.500l10 10M10.500.5l-10 10" stroke="#fff" stroke-width="1.300"/></svg></button></header>
    <div class="alert-body d-flex">
      <svg width="30" height="30" viewBox="0 0 30 30"><circle cx="15" cy="15" r="14.500" fill="#f03a17" stroke="#b82a10"/><path d="M9 9l12 12M21 9L9 21" stroke="#fff" stroke-width="2.500"/></svg>
      <div>Lexical error in script<br>'G:\Dev\MdmDefrag\TaylorDOVs0_2\Scripts\ScriptsYearly\Defra<br>gSystemDiskYearly.MyD' at line 7463 column 1.<br><br>Unkown symbol.</div>
    </div>
    <footer class="d-flex align-items-center justify-content-end"><button class="ok">OK</button></footer>
  </section>
</main>
</div>
<script src="https://cdn.jsdelivr.net/npm/bootstrap@5.3.0/dist/js/bootstrap.bundle.min.js"></script>
</body>
</html>
